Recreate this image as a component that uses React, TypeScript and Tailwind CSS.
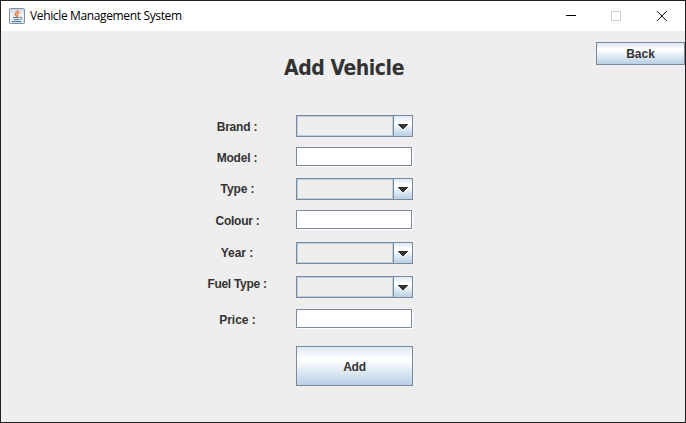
import React from "react";

const labelFont = "font-['Liberation_Sans',Arial,sans-serif] text-[12px] font-bold leading-[14px] text-[#333333]";
const metal = "border border-[#7a8a99] bg-[linear-gradient(180deg,#dde8f3_0%,#ffffff_30%,#ffffff_35%,#b8cfe5_100%)]";

function JavaIcon() {
  return (
    <svg width="16" height="16" viewBox="0 0 16 16" className="shrink-0">
      <defs>
        <linearGradient id="tile" x1="0" y1="0" x2="0" y2="1">
          <stop offset="0" stopColor="#cbd5de" />
          <stop offset="0.5" stopColor="#f5f7f8" />
          <stop offset="1" stopColor="#cfdce6" />
        </linearGradient>
      </defs>
      <rect x="0.5" y="0.5" width="15" height="15" rx="1" fill="url(#tile)" stroke="#7892a7" />
      <path d="M8.8 1.8C9.6 3.8 5.6 4.6 6.1 6.5C6.4 7.4 7.3 7.6 7.5 8.6M10.6 4.3C8.6 5 7.6 6 8.6 7C9 7.6 8.8 8.1 8.3 8.7" fill="none" stroke="#e8782d" strokeWidth="1.3" />
      <path d="M4 9.5H10.5M5 11.5H10M3 13.5H12M10.8 9.4C13.6 8.6 13.2 11 10.8 11.4" fill="none" stroke="#55799a" strokeWidth="1" />
    </svg>
  );
}

function Combo() {
  return (
    <div className="flex h-[22px] w-[117px] border border-[#7a8a99]">
      <div className="w-[96px] border border-[#b8cfe5] bg-[#eeeeee]" />
      <div className="flex flex-1 items-start justify-center border-l border-[#7a8a99] bg-[linear-gradient(180deg,#dde8f3_0%,#ffffff_30%,#ffffff_35%,#b8cfe5_100%)]">
        <svg width="10" height="5" viewBox="0 0 10 5" shapeRendering="crispEdges" className="mt-[8px] shrink-0">
          <path d="M0 0H10V1H9V2H8V3H7V4H6V5H4V4H3V3H2V2H1V1H0Z" fill="#333333" />
        </svg>
      </div>
    </div>
  );
}

function Field() {
  return (
    <div className="h-[19px] w-[116px] border border-[#7a8a99] bg-white shadow-[1px_1px_0_#ffffff]" />
  );
}

const rows = [
  { label: "Brand :", combo: true, row: "mb-[10px]", text: "mt-[5px] tracking-[-0.2px]" },
  { label: "Model :", combo: false, row: "mb-[12px]", text: "mt-[4px] tracking-[-0.2px]" },
  { label: "Type :", combo: true, row: "mb-[10px]", text: "mt-[4px] tracking-[-0.1px] pl-[1px]" },
  { label: "Colour :", combo: false, row: "mb-[13px]", text: "mt-[4px] tracking-[-0.25px] pl-[1px]" },
  { label: "Year :", combo: true, row: "mb-[12px]", text: "mt-[4px]" },
  { label: "Fuel Type :", combo: true, row: "mb-[11px]", text: "mt-[1px] tracking-[-0.3px]" },
  { label: "Price :", combo: false, row: "mb-[18px]", text: "mt-[4px] pl-[1px]" },
];

export default function App() {
  return (
    <div className="flex h-[423px] w-[686px] flex-col overflow-hidden border border-[#202024] bg-[#eeeeee]">
      <header className="flex h-[30px] shrink-0 items-center bg-white pl-2">
        <JavaIcon />
        <span className="ml-[5px] whitespace-nowrap font-['Open_Sans','Noto_Sans',sans-serif] text-[12px] leading-4 tracking-[-0.36px] text-black">
          Vehicle Management System
        </span>
        <svg width="102" height="10" viewBox="0 0 102 10" className="ml-auto mr-[18px]" fill="none">
          <path d="M1 4.5H11" stroke="#000" shapeRendering="crispEdges" />
          <rect x="46.5" y="0.5" width="9" height="9" stroke="#cccccc" />
          <path d="M92 0.2L101.7 9.9M101.7 0.2L92 9.9" stroke="#000" />
        </svg>
      </header>
      <main className="flex flex-col">
        <div className="mt-[11px] flex h-[44px] items-start">
          <h1 className="ml-[283px] mt-[12px] w-[121px] whitespace-nowrap font-['DejaVu_Sans_Condensed','DejaVu_Sans',sans-serif] text-[21px] font-bold leading-7 tracking-[-0.45px] text-[#333333]">
            Add Vehicle
          </h1>
          <button className={`ml-auto h-[23px] w-[89px] ${labelFont} ${metal}`}>Back</button>
        </div>
        <form className="ml-[196px] mt-[29px] flex w-[217px] flex-col">
          {rows.map((r) => (
            <div key={r.label} className={`flex items-start ${r.row}`}>
              <label className={`h-[14px] w-[80px] whitespace-nowrap text-center ${labelFont} ${r.text}`}>{r.label}</label>
              <div className="ml-[19px]">{r.combo ? <Combo /> : <Field />}</div>
            </div>
          ))}
          <button type="button" className={`ml-[99px] h-[40px] w-[117px] pt-[2px] tracking-[-0.2px] ${labelFont} ${metal}`}>Add</button>
        </form>
      </main>
    </div>
  );
}
